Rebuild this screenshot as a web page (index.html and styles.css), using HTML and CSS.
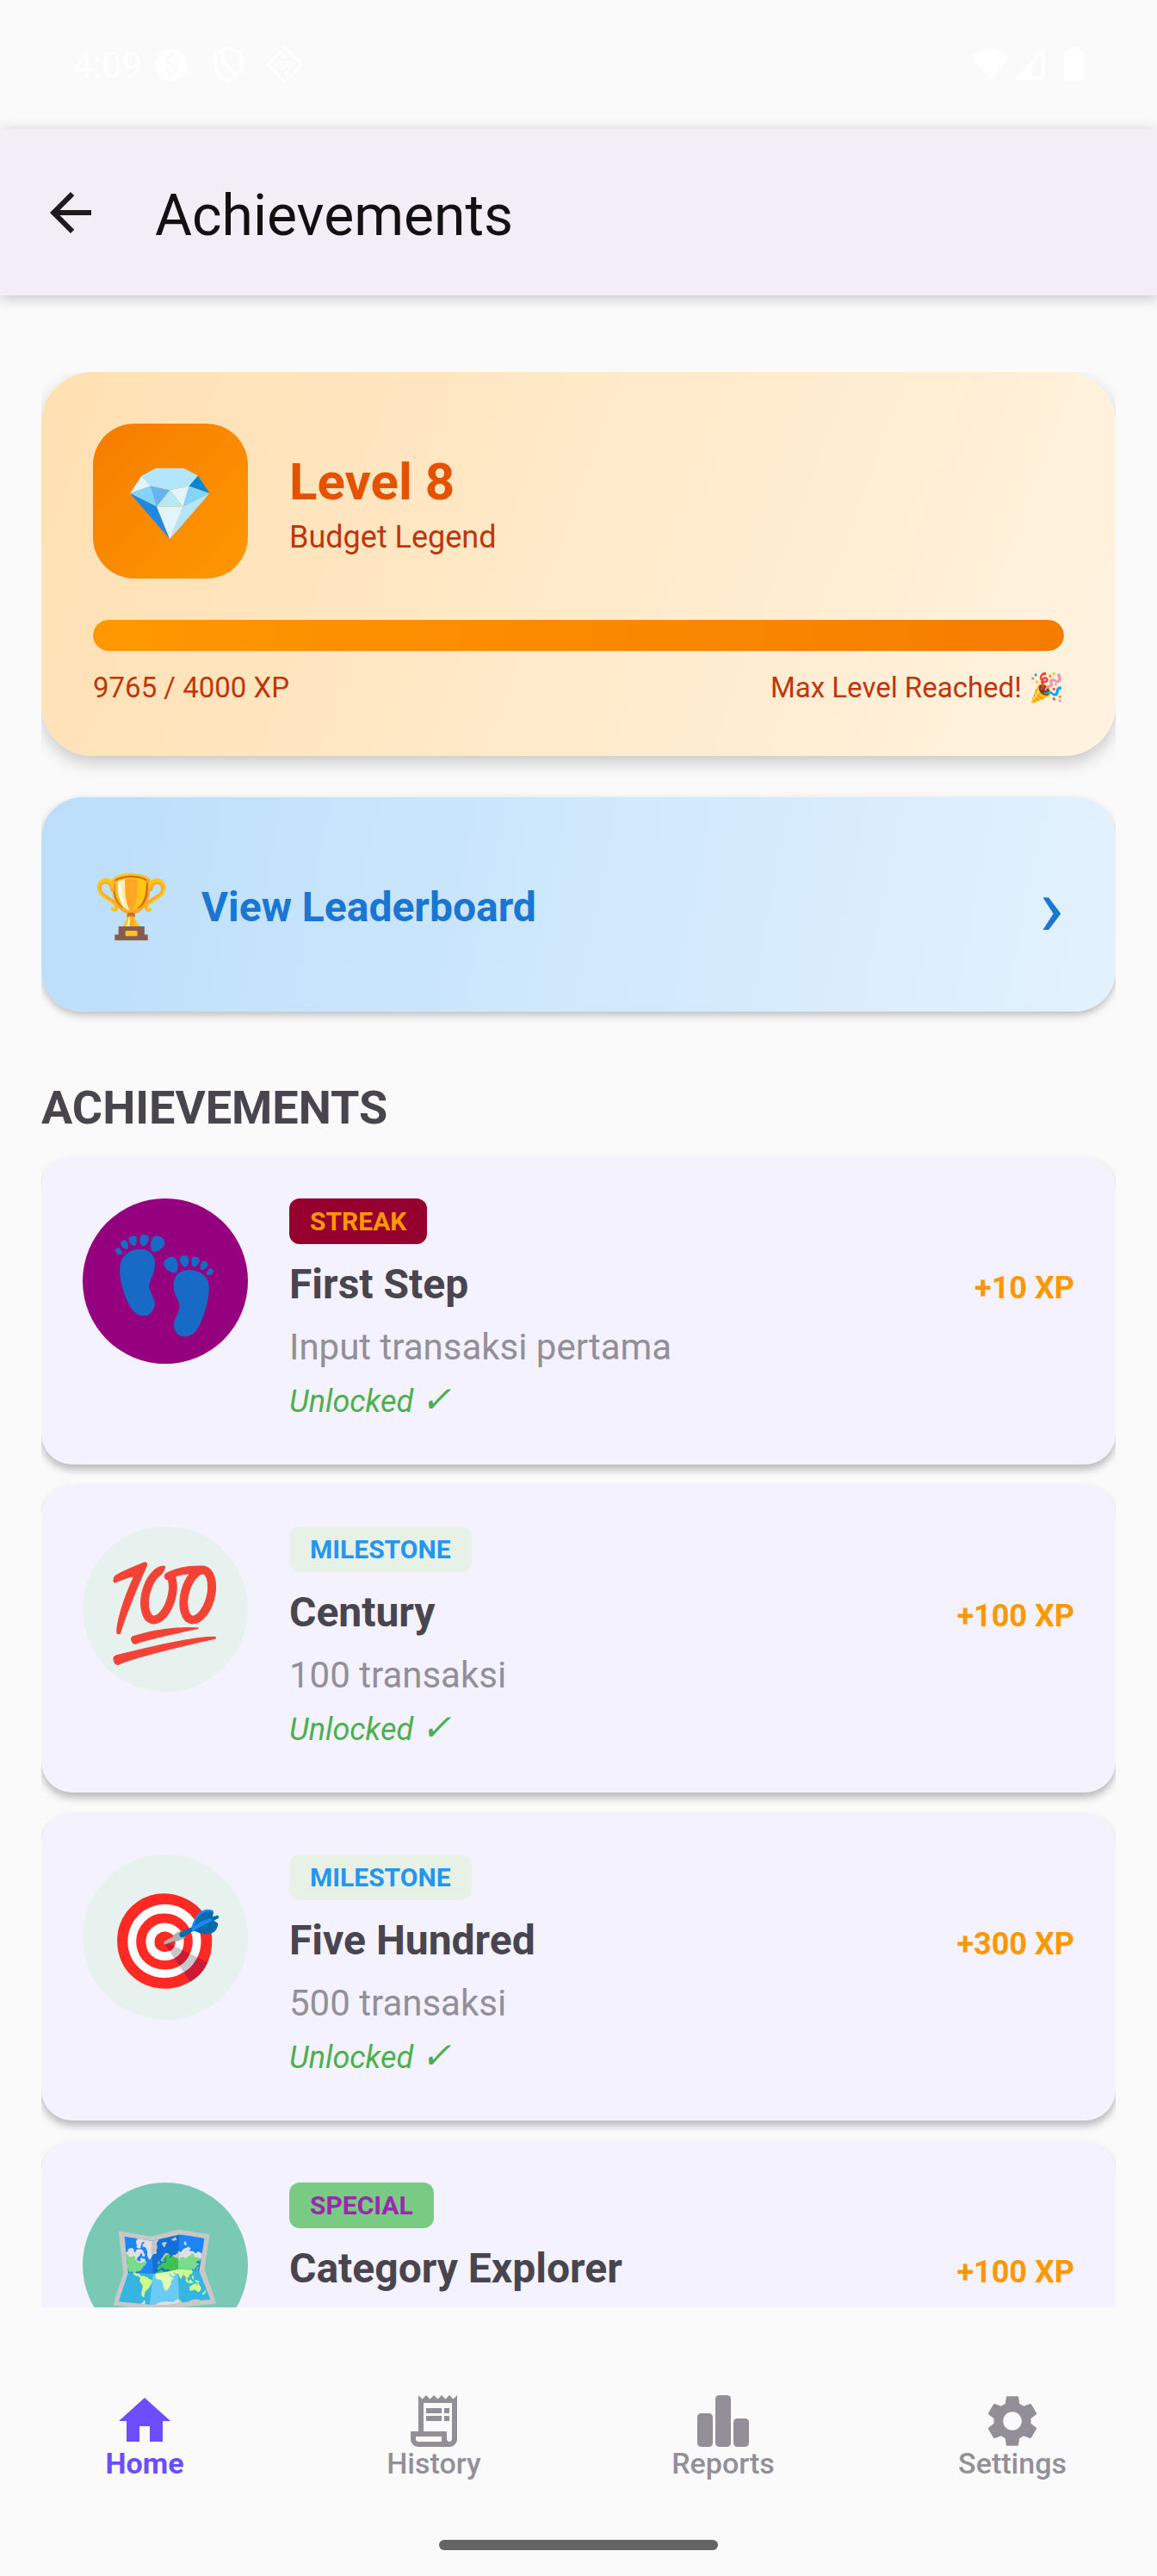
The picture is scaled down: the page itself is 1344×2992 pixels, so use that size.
FILE: index.html
```
<!DOCTYPE html>
<html lang="id">
<head>
    <meta charset="UTF-8">
    <meta name="viewport" content="width=device-width, initial-scale=1.0">
    <title>Achievements</title>
    <link rel="stylesheet" href="styles.css">
</head>
<body>
    <div class="status-bar">
        <span class="time">4:09</span>
        <svg class="status-icon" viewBox="0 0 44 44"><circle cx="22" cy="22" r="19" fill="#fff"/><path d="M28 17c0-3-3-5-6-5s-6 2-6 5 3 4 6 5 6 2 6 5-3 5-6 5-6-2-6-5M22 8v4M22 32v4" fill="none" stroke="#fafafa" stroke-width="3"/></svg>
        <svg class="status-icon" viewBox="0 0 44 44"><path d="M22 3l15 6v12c0 10-6 17-15 20C13 38 7 31 7 21V9zM16 7c-2 14 2 14 8 19 5 4 7 6 5 10" fill="none" stroke="#fff" stroke-width="4"/></svg>
        <svg class="status-icon" viewBox="0 0 44 44"><path d="M22 2l20 20-20 20L2 22z" fill="none" stroke="#fff" stroke-width="3" stroke-linejoin="round"/><path d="M22 8v8l-6-2zM36 22h-8l2-6zM22 36v-8l6 2zM8 22h8l-2 6zM16 16l6 4-4 4zM28 28l-6-4 4-4zM28 16l-4 6-2-4zM16 28l4-6 2 4z" fill="#fff"/></svg>
        <div class="status-right">
            <svg width="45" height="40" viewBox="0 0 45 40"><path d="M0 11Q22.500-9 45 11L22.500 38z" fill="#fff"/></svg>
            <svg width="37" height="40" viewBox="0 0 37 40"><path d="M0 38L37 0v38zM22 22v12h11V10z" fill="#fff" fill-rule="evenodd"/></svg>
            <svg class="battery" width="24" height="40" viewBox="0 0 24 40"><path d="M7 0h10v4h5q2 0 2 2v31q0 2-2 2H2q-2 0-2-2V6q0-2 2-2h5z" fill="#fff"/></svg>
        </div>
    </div>

    <header class="header">
        <button class="back" aria-label="Back">
            <svg viewBox="0 0 24 24"><path d="M20 11H7.830l5.590-5.590L12 4l-8 8 8 8 1.410-1.410L7.830 13H20z" fill="currentColor"/></svg>
        </button>
        <h1>Achievements</h1>
    </header>

    <main class="content">
        <section class="level-card">
            <div class="level-top">
                <div class="level-icon">💎</div>
                <div>
                    <h2 class="level-name">Level 8</h2>
                    <p class="level-title">Budget Legend</p>
                </div>
            </div>
            <div class="progress"><div class="progress-fill" style="width: 100%"></div></div>
            <div class="level-meta"><span>9765 / 4000 XP</span><span>Max Level Reached! 🎉</span></div>
        </section>

        <a class="leaderboard" href="#">
            <span class="trophy">🏆</span>
            <span class="leaderboard-text">View Leaderboard</span>
            <span class="chevron">›</span>
        </a>

        <h2 class="section-title">ACHIEVEMENTS</h2>

        <div class="list">
            <article class="card">
                <div class="icon streak-icon">👣</div>
                <div class="info">
                    <span class="badge streak">STREAK</span>
                    <h3>First Step</h3>
                    <p class="desc">Input transaksi pertama</p>
                    <p class="unlocked">Unlocked <span class="check">✓</span></p>
                </div>
                <span class="xp">+10 XP</span>
            </article>
            <article class="card">
                <div class="icon milestone-icon">💯</div>
                <div class="info">
                    <span class="badge milestone">MILESTONE</span>
                    <h3>Century</h3>
                    <p class="desc">100 transaksi</p>
                    <p class="unlocked">Unlocked <span class="check">✓</span></p>
                </div>
                <span class="xp">+100 XP</span>
            </article>
            <article class="card">
                <div class="icon milestone-icon">🎯</div>
                <div class="info">
                    <span class="badge milestone">MILESTONE</span>
                    <h3>Five Hundred</h3>
                    <p class="desc">500 transaksi</p>
                    <p class="unlocked">Unlocked <span class="check">✓</span></p>
                </div>
                <span class="xp">+300 XP</span>
            </article>
            <article class="card">
                <div class="icon special-icon">🗺️</div>
                <div class="info">
                    <span class="badge special">SPECIAL</span>
                    <h3>Category Explorer</h3>
                </div>
                <span class="xp">+100 XP</span>
            </article>
        </div>
    </main>

    <nav class="tabs">
        <a class="tab active" href="#">
            <svg viewBox="0 0 24 24"><path d="M10 20v-6h4v6h5v-8h3L12 3 2 12h3v8z"/></svg>
            Home
        </a>
        <a class="tab" href="#">
            <svg viewBox="0 0 24 24"><path d="M19.500 3.500L18 2l-1.500 1.500L15 2l-1.500 1.500L12 2l-1.500 1.500L9 2 7.500 3.500 6 2v14H3v3c0 1.660 1.340 3 3 3h12c1.660 0 3-1.340 3-3V2l-1.500 1.500zM15 20H6c-.550 0-1-.450-1-1v-1h10v2zm4-1c0 .550-.450 1-1 1s-1-.450-1-1v-3H8V5h11v14z"/><path d="M9 7h6v2H9zM16 7h2v2h-2zM9 10h6v2H9zM16 10h2v2h-2z"/></svg>
            History
        </a>
        <a class="tab" href="#">
            <svg viewBox="0 0 24 24"><rect x="2" y="9" width="6" height="13" rx="1.500"/><rect x="9" y="2" width="6" height="20" rx="1.500"/><rect x="16" y="11" width="6" height="11" rx="1.500"/></svg>
            Reports
        </a>
        <a class="tab" href="#">
            <svg viewBox="0 0 24 24"><path d="M19.140 12.940c.04-.3.06-.61.06-.94 0-.32-.02-.64-.07-.94l2.030-1.580c.18-.14.23-.41.12-.61l-1.920-3.320c-.12-.22-.37-.29-.59-.22l-2.390.96c-.5-.38-1.030-.7-1.620-.94l-.36-2.540c-.04-.24-.24-.41-.48-.41h-3.840c-.24 0-.43.17-.47.41l-.36 2.540c-.59.24-1.130.57-1.620.94l-2.390-.96c-.22-.08-.47 0-.59.22L2.740 8.870c-.12.21-.08.47.12.61l2.030 1.580c-.05.3-.09.63-.09.94s.02.64.07.94l-2.030 1.580c-.18.14-.23.41-.12.61l1.920 3.320c.12.22.37.29.59.22l2.390-.96c.5.38 1.030.7 1.620.94l.36 2.540c.05.24.24.41.48.41h3.840c.24 0 .44-.17.47-.41l.36-2.540c.59-.24 1.130-.56 1.620-.94l2.390.96c.22.08.47 0 .59-.22l1.920-3.320c.12-.22.07-.47-.12-.61l-2.010-1.580zM12 15.600c-1.980 0-3.600-1.620-3.600-3.600s1.620-3.600 3.600-3.600 3.600 1.620 3.600 3.600-1.620 3.600-3.600 3.600z"/></svg>
            Settings
        </a>
    </nav>
    <div class="home-indicator"></div>
</body>
</html>
```
FILE: styles.css
```
* {
    box-sizing: border-box;
    margin: 0;
    padding: 0;
}
body {
    background-color: #fafafa;
    color: #49454f;
    font-family: Roboto, "Noto Color Emoji", sans-serif;
    display: flex;
    flex-direction: column;
    height: 100vh;
}
a {
    color: inherit;
    text-decoration: none;
}
.status-bar {
    display: flex;
    align-items: center;
    gap: 22px;
    height: 150px;
    padding: 0 84px;
    color: #fff;
    font-size: 42px;
}
.time {
    margin-right: -10px;
}
.status-icon {
    width: 44px;
    height: 44px;
}
.status-right {
    display: flex;
    gap: 4px;
    margin-left: auto;
}
.battery {
    margin-left: 18px;
}
.header {
    display: flex;
    align-items: center;
    gap: 62px;
    height: 193px;
    padding: 0 46px;
    background-color: #f3edf7;
    box-shadow: 0 3px 16px rgba(0, 0, 0, 0.22);
}
.header h1 {
    padding-top: 8px;
    color: #111114;
    font-size: 66px;
    font-weight: 400;
}
.back {
    width: 72px;
    height: 72px;
    border: none;
    background: none;
    color: #1d1b20;
}
.content {
    flex: 1;
    min-height: 0;
    margin: 89px 48px 0;
    overflow: hidden;
}
.level-card {
    padding: 60px;
    border-radius: 60px;
    background: linear-gradient(110deg, #ffe0b2, #fff3e0);
    box-shadow: 0 8px 20px rgba(0, 0, 0, 0.2);
    color: #bf360c;
}
.level-top {
    display: flex;
    align-items: center;
    gap: 48px;
}
.level-icon {
    display: flex;
    align-items: center;
    justify-content: center;
    width: 180px;
    height: 180px;
    padding-top: 6px;
    border-radius: 48px;
    background: linear-gradient(135deg, #f57c00, #ff9800);
    font-size: 84px;
}
.level-name {
    color: #e65100;
    font-size: 60px;
    line-height: 84px;
}
.level-title {
    font-size: 36px;
    line-height: 44px;
}
.progress {
    height: 36px;
    margin: 48px 0 24px;
    border-radius: 18px;
    overflow: hidden;
}
.progress-fill {
    height: 100%;
    border-radius: 18px;
    background: linear-gradient(90deg, #ff9800, #f57c00);
}
.level-meta {
    display: flex;
    justify-content: space-between;
    font-size: 33px;
    line-height: 38px;
}
.leaderboard {
    display: flex;
    align-items: center;
    gap: 36px;
    height: 249px;
    margin-top: 48px;
    padding: 6px 60px 0;
    border-radius: 48px;
    background: linear-gradient(101deg, #bbdefb, #e3f2fd);
    box-shadow: 0 4px 10px rgba(0, 0, 0, 0.25);
    color: #1976d2;
}
.trophy {
    font-size: 72px;
}
.leaderboard-text {
    flex: 1;
    font-size: 48px;
    font-weight: 700;
}
.chevron {
    font-size: 96px;
}
.section-title {
    margin: 78px 0 24px;
    font-size: 54px;
    line-height: 67px;
}
.list {
    display: flex;
    flex-direction: column;
    gap: 24px;
}
.card {
    display: flex;
    gap: 48px;
    min-height: 357px;
    padding: 48px;
    border-radius: 36px;
    background-color: #f4f2ff;
    box-shadow: 0 6px 10px rgba(0, 0, 0, 0.26);
}
.icon {
    display: flex;
    align-items: center;
    justify-content: center;
    width: 192px;
    height: 192px;
    padding-top: 10px;
    border-radius: 50%;
    font-size: 108px;
}
.streak-icon {
    background-color: #95007f;
}
.milestone-icon {
    background-color: #e7f1ee;
}
.special-icon {
    background-color: #7ac9b4;
}
.info {
    display: flex;
    flex-direction: column;
    align-items: flex-start;
    gap: 12px;
    flex: 1;
}
.badge {
    padding: 9px 24px;
    border-radius: 12px;
    font-size: 30px;
    font-weight: 700;
    line-height: 35px;
}
.streak {
    background-color: #95002f;
    color: #ff9800;
}
.milestone {
    background-color: #e8f1e5;
    color: #2196f3;
}
.special {
    background-color: #79cb84;
    color: #9c27b0;
}
.info h3 {
    font-size: 48px;
    line-height: 69px;
}
.desc {
    color: #938f99;
    font-size: 42px;
    line-height: 54px;
}
.unlocked {
    color: #4caf50;
    font-size: 36px;
    font-style: italic;
    line-height: 49px;
}
.check {
    font-size: 42px;
    line-height: 36px;
}
.xp {
    margin-top: 83px;
    color: #ff9800;
    font-size: 36px;
    font-weight: 700;
    line-height: 42px;
}
.tabs {
    display: grid;
    grid-template-columns: repeat(4, 1fr);
    height: 270px;
    padding-top: 96px;
}
.tab {
    display: flex;
    flex-direction: column;
    align-items: center;
    color: #938f99;
    fill: currentColor;
    font-size: 34px;
    font-weight: 500;
    line-height: 26px;
}
.tab svg {
    width: 72px;
    height: 72px;
}
.active {
    color: #6c4dff;
    font-weight: 700;
}
.home-indicator {
    width: 324px;
    height: 12px;
    margin: 0 auto 30px;
    border-radius: 6px;
    background-color: #646464;
}
```
